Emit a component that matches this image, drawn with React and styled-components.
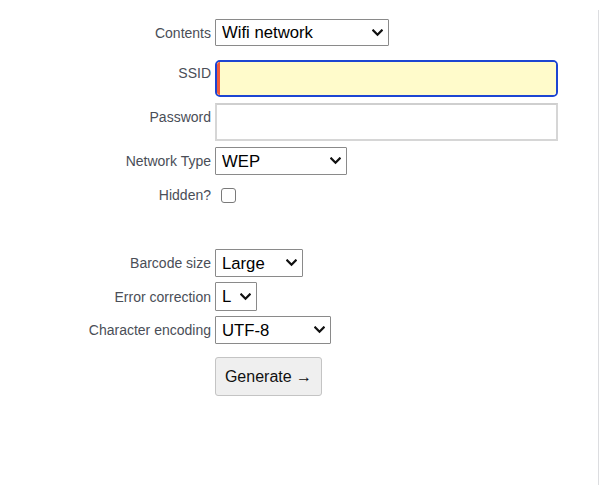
import React from "react";
import styled, { createGlobalStyle } from "styled-components";

const Global = createGlobalStyle`
  html, body { margin: 0; padding: 0; background: #fff; }
  body { font-family: "Liberation Sans", Arial, sans-serif; }
`;

const Page = styled.div`
  width: 600px;
  height: 485px;
  box-sizing: border-box;
  padding-top: 10px;
`;

const Frame = styled.div`
  width: 599px;
  height: 475px;
  box-sizing: border-box;
  border-right: 1px solid #dcdde0;
  padding-top: 9px;
`;

const Row = styled.div`
  display: grid;
  grid-template-columns: 211px auto;
  column-gap: 4px;
  align-items: ${(p) => (p.$top ? "start" : "center")};
  margin-top: ${(p) => p.$mt || 0}px;
  height: ${(p) => p.$h}px;
`;

const Label = styled.label`
  text-align: right;
  font-size: 14px;
  line-height: 16px;
  color: #4a4e57;
  padding-top: ${(p) => p.$pt || 0}px;
`;

const SelectWrap = styled.div`
  position: relative;
  width: ${(p) => p.$w}px;
  height: ${(p) => p.$h}px;
`;

const Select = styled.select`
  appearance: none;
  -webkit-appearance: none;
  width: 100%;
  height: 100%;
  box-sizing: border-box;
  border: 1px solid #8a8a8a;
  border-radius: 1px;
  background: #fff;
  color: #000;
  font-family: "Liberation Sans", Arial, sans-serif;
  font-size: 16.7px;
  padding: 0 0 0 6px;
  margin: 0;
  outline: none;
`;

const Chevron = styled.svg`
  position: absolute;
  right: 6px;
  top: 50%;
  margin-top: -4px;
  width: 11px;
  height: 8px;
  pointer-events: none;
`;

const FocusRing = styled.div`
  width: 343px;
  height: 37px;
  box-sizing: border-box;
  border: 2px solid #1c45d2;
  border-radius: 5px;
  overflow: hidden;
  display: flex;
`;

const TextInput = styled.input`
  box-sizing: border-box;
  width: ${(p) => p.$w}px;
  height: ${(p) => p.$h}px;
  margin: 0;
  font-family: "Liberation Sans", Arial, sans-serif;
  font-size: 16px;
  padding: 0 6px;
  outline: none;
  ${(p) =>
    p.$active
      ? `
    flex: 1;
    height: 100%;
    border: none;
    border-left: 3px solid #ef5a3a;
    background: #fffbcb;
  `
      : `
    border: 2px solid #d6d6d6;
    border-top-color: #cfcfcf;
    background: #fff;
  `}
`;

const Check = styled.input`
  appearance: none;
  -webkit-appearance: none;
  width: 15px;
  height: 15px;
  margin: 0 0 0 6px;
  box-sizing: border-box;
  border: 1px solid #7a7a7a;
  border-radius: 3px;
  background: #fff;
`;

const Button = styled.button`
  width: 107px;
  height: 39px;
  box-sizing: border-box;
  background: #efefef;
  border: 1px solid #c4c4c4;
  border-radius: 3px;
  font-family: "Liberation Sans", Arial, sans-serif;
  font-size: 16px;
  color: #111;
  padding: 0;
  margin: 0;
`;

const Arrow = () => (
  <Chevron viewBox="0 0 11 8">
    <path d="M1.3 1.5 L5.5 5.7 L9.7 1.5" fill="none" stroke="#111" strokeWidth="2.3" strokeLinecap="square" />
  </Chevron>
);

const Dropdown = ({ w, h, value, options }) => (
  <SelectWrap $w={w} $h={h}>
    <Select defaultValue={value}>
      {options.map((o) => (
        <option key={o}>{o}</option>
      ))}
    </Select>
    <Arrow />
  </SelectWrap>
);

export default function App() {
  return (
    <Page>
      <Global />
      <Frame>
        <Row $h={27}>
          <Label>Contents</Label>
          <Dropdown w={174} h={27} value="Wifi network" options={["Text", "URL", "Wifi network"]} />
        </Row>
        <Row $h={37} $mt={14} $top>
          <Label $pt={5}>SSID</Label>
          <FocusRing>
            <TextInput $active />
          </FocusRing>
        </Row>
        <Row $h={38} $mt={6} $top>
          <Label $pt={6}>Password</Label>
          <TextInput $w={343} $h={38} type="text" />
        </Row>
        <Row $h={28} $mt={6}>
          <Label>Network Type</Label>
          <Dropdown w={132} h={28} value="WEP" options={["WEP", "WPA/WPA2", "None"]} />
        </Row>
        <Row $h={15} $mt={12}>
          <Label>Hidden?</Label>
          <Check type="checkbox" />
        </Row>
        <Row $h={28} $mt={47}>
          <Label>Barcode size</Label>
          <Dropdown w={88} h={28} value="Large" options={["Small", "Medium", "Large"]} />
        </Row>
        <Row $h={29} $mt={5}>
          <Label>Error correction</Label>
          <Dropdown w={42} h={29} value="L" options={["L", "M", "Q", "H"]} />
        </Row>
        <Row $h={28} $mt={5}>
          <Label>Character encoding</Label>
          <Dropdown w={116} h={28} value="UTF-8" options={["UTF-8", "ISO-8859-1"]} />
        </Row>
        <Row $h={39} $mt={13}>
          <span />
          <Button>Generate →</Button>
        </Row>
      </Frame>
    </Page>
  );
}
